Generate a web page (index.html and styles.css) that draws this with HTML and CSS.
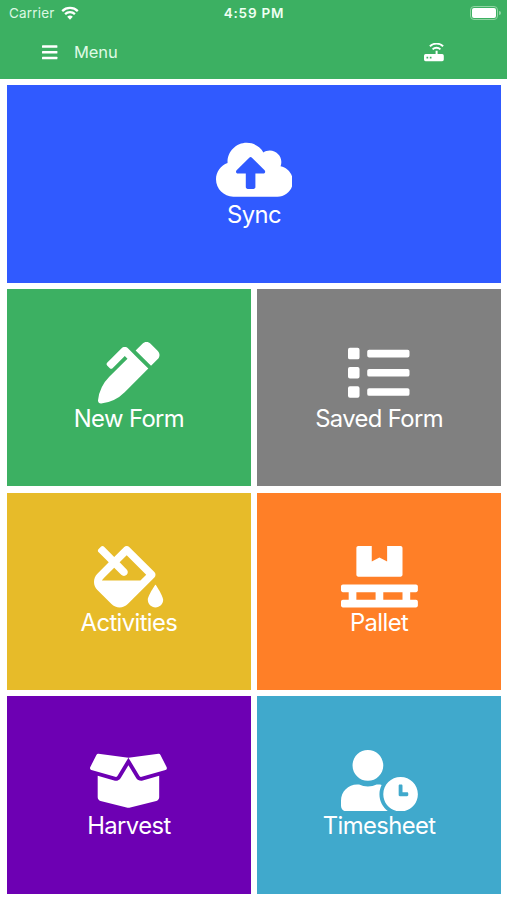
FILE: index.html
```
<!DOCTYPE html>
<html lang="en">

<head>
    <meta charset="UTF-8">
    <meta name="viewport" content="width=device-width, initial-scale=1.0">
    <title>Menu</title>
    <link rel="stylesheet" href="styles.css">
</head>

<body>
    <header class="header">
        <div class="status-bar">
            <div class="carrier">
                <span class="carrier-name">Carrier</span>
                <svg class="wifi" viewBox="0 0 18 14">
                    <path d="M1.2 5.1a11.2 11.2 0 0 1 15.6 0" />
                    <path d="M4.1 8.1a7 7 0 0 1 9.8 0" />
                    <path class="solid" d="M9 13.7L6.2 10.8a4 4 0 0 1 5.6 0z" />
                </svg>
            </div>
            <div class="time">4:59 PM</div>
            <div class="battery">
                <div class="battery-body"></div>
                <div class="battery-cap"></div>
            </div>
        </div>
        <nav class="toolbar">
            <div class="menu">
                <svg class="bars" viewBox="0 0 16 15">
                    <rect x="0" y="0.2" width="15.4" height="2.6" rx="0.6" />
                    <rect x="0" y="6" width="15.4" height="2.6" rx="0.6" />
                    <rect x="0" y="11.7" width="15.4" height="2.6" rx="0.6" />
                </svg>
                <span class="menu-title">Menu</span>
            </div>
            <svg class="router" viewBox="0 0 20 19">
                <path class="line" d="M5.9 3.3a9.5 9.5 0 0 1 13.2 0M8.6 6.4a5.6 5.6 0 0 1 7.8 0" />
                <path fill-rule="evenodd" d="M11.6 7.7h2v3.4h4.6a1.6 1.6 0 0 1 1.6 1.6v3.9a1.6 1.6 0 0 1-1.6 1.6H1.6A1.6 1.6 0 0 1 0 16.6v-3.9a1.6 1.6 0 0 1 1.6-1.6h10zM2.5 13.7v1.8h1.7v-1.8zM5.8 13.7v1.8h1.7v-1.8z" />
            </svg>
        </nav>
    </header>

    <main class="tiles">
        <a class="tile sync">
            <svg class="icon" viewBox="0 0 640 512">
                <path d="M537.6 226.6c4.1-10.7 6.4-22.4 6.4-34.6 0-53-43-96-96-96-19.7 0-38.1 6-53.3 16.2C367 64.2 315.3 32 256 32c-88.4 0-160 71.6-160 160 0 2.7.1 5.4.2 8.1C40.2 219.8 0 273.2 0 336c0 79.5 64.5 144 144 144h368c70.7 0 128-57.3 128-128 0-61.9-44-113.6-102.4-125.4zM393.4 288H328v112c0 8.8-7.2 16-16 16h-48c-8.8 0-16-7.2-16-16V288h-65.4c-14.3 0-21.4-17.2-11.3-27.3l105.4-105.4c6.2-6.2 16.4-6.2 22.6 0l105.4 105.4c10.1 10.1 2.9 27.3-11.3 27.3z" />
            </svg>
            <span class="label">Sync</span>
        </a>
        <a class="tile new-form">
            <svg class="icon" viewBox="0 0 512 512">
                <path d="M497.94 74.17l-60.11-60.11c-18.75-18.75-49.16-18.75-67.91 0l-56.55 56.55 128.02 128.02 56.55-56.55c18.75-18.75 18.75-49.15 0-67.91zm-246.8-20.53c-15.62-15.62-40.94-15.62-56.56 0L75.8 172.43c-6.25 6.25-6.25 16.38 0 22.62l22.63 22.63c6.25 6.25 16.38 6.25 22.63 0l101.82-101.82 22.63 22.62L93.95 290.03A327.038 327.038 0 0 0 .17 485.11l-.03.23c-1.7 15.28 11.21 28.2 26.49 26.51a327.02 327.02 0 0 0 195.34-93.8l196.79-196.79-82.77-82.77-84.85-84.85z" />
            </svg>
            <span class="label">New Form</span>
        </a>
        <a class="tile saved-form">
            <svg class="icon" viewBox="0 0 512 512">
                <path d="M80 368H16a16 16 0 0 0-16 16v64a16 16 0 0 0 16 16h64a16 16 0 0 0 16-16v-64a16 16 0 0 0-16-16zm0-320H16A16 16 0 0 0 0 64v64a16 16 0 0 0 16 16h64a16 16 0 0 0 16-16V64a16 16 0 0 0-16-16zm0 160H16a16 16 0 0 0-16 16v64a16 16 0 0 0 16 16h64a16 16 0 0 0 16-16v-64a16 16 0 0 0-16-16zm416 176H176a16 16 0 0 0-16 16v32a16 16 0 0 0 16 16h320a16 16 0 0 0 16-16v-32a16 16 0 0 0-16-16zm0-320H176a16 16 0 0 0-16 16v32a16 16 0 0 0 16 16h320a16 16 0 0 0 16-16V80a16 16 0 0 0-16-16zm0 160H176a16 16 0 0 0-16 16v32a16 16 0 0 0 16 16h320a16 16 0 0 0 16-16v-32a16 16 0 0 0-16-16z" />
            </svg>
            <span class="label">Saved Form</span>
        </a>
        <a class="tile activities">
            <svg class="icon" viewBox="0 0 576 512">
                <path d="M512 320s-64 92.65-64 128c0 35.35 28.66 64 64 64s64-28.65 64-64-64-128-64-128zm-9.37-102.94L294.94 9.37C288.69 3.12 280.5 0 272.31 0s-16.38 3.12-22.62 9.37l-81.58 81.58L81.93 4.76c-6.25-6.25-16.38-6.25-22.62 0L36.69 27.38c-6.24 6.25-6.24 16.38 0 22.62l86.19 86.18-94.76 94.76c-37.49 37.48-37.49 98.26 0 135.75l117.19 117.19c18.74 18.74 43.31 28.12 67.87 28.12 24.57 0 49.13-9.37 67.87-28.12l221.57-221.57c12.5-12.5 12.5-32.75.01-45.25zm-116.22 70.97H65.93c1.36-3.84 3.57-7.98 7.43-11.83l13.15-13.15 81.61-81.61 58.6 58.6c12.49 12.49 32.75 12.49 45.24 0s12.49-32.75 0-45.24l-58.6-58.6 58.95-58.95 162.44 162.44-48.34 48.34z" />
            </svg>
            <span class="label">Activities</span>
        </a>
        <a class="tile pallet">
            <svg class="icon" viewBox="0 0 640 512">
                <path d="M144 256h352c8.8 0 16-7.2 16-16V16c0-8.8-7.2-16-16-16H384v128l-64-32-64 32V0H144c-8.8 0-16 7.2-16 16v224c0 8.8 7.2 16 16 16zm480 128c8.8 0 16-7.2 16-16v-32c0-8.8-7.2-16-16-16H16c-8.8 0-16 7.2-16 16v32c0 8.8 7.2 16 16 16h48v64H16c-8.8 0-16 7.2-16 16v32c0 8.8 7.2 16 16 16h608c8.8 0 16-7.2 16-16v-32c0-8.8-7.2-16-16-16h-48v-64h48zm-336 64H128v-64h160v64zm224 0H352v-64h160v64z" />
            </svg>
            <span class="label">Pallet</span>
        </a>
        <a class="tile harvest">
            <svg class="icon" viewBox="0 0 640 512">
                <path d="M425.7 256c-16.9 0-32.8-9-41.4-23.4L320 126l-64.2 106.6c-8.7 14.5-24.6 23.5-41.5 23.5-4.5 0-9-.6-13.3-1.9L64 215v178c0 14.7 10 27.5 24.2 31l216.2 54.1c10.2 2.5 20.9 2.5 31 0L551.8 424c14.2-3.6 24.2-16.4 24.2-31V215l-137 39.1c-4.3 1.3-8.8 1.9-13.3 1.9zm212.6-112.2L586.8 41c-3.1-6.2-9.8-9.8-16.7-8.9L320 64l91.7 152.1c3.8 6.3 11.4 9.3 18.5 7.3l197.9-56.5c9.9-2.9 14.7-13.9 10.2-23.1zM53.2 41L1.7 143.8c-4.6 9.2.3 20.2 10.1 23l197.9 56.5c7.1 2 14.7-1 18.5-7.3L320 64 69.8 32.1c-6.9-.8-13.5 2.7-16.6 8.9z" />
            </svg>
            <span class="label">Harvest</span>
        </a>
        <a class="tile timesheet">
            <svg class="icon" viewBox="0 0 640 512">
                <path d="M496 224c-79.6 0-144 64.4-144 144s64.4 144 144 144 144-64.4 144-144-64.4-144-144-144zm64 150.3c0 5.3-4.4 9.7-9.7 9.7h-60.6c-5.3 0-9.7-4.4-9.7-9.7v-76.6c0-5.3 4.4-9.7 9.7-9.7h12.6c5.3 0 9.7 4.4 9.7 9.7V352h38.3c5.3 0 9.7 4.4 9.7 9.7v12.6zM320 368c0-27.8 6.7-54.1 18.2-77.5-8-1.5-16.2-2.5-24.6-2.5h-16.7c-22.2 10.2-46.9 16-72.9 16s-50.6-5.8-72.9-16h-16.7C60.2 288 0 348.2 0 422.4V464c0 26.5 21.5 48 48 48h347.1c-45.3-31.9-75.1-84.5-75.1-144zm-96-112c70.7 0 128-57.3 128-128S294.7 0 224 0 96 57.3 96 128s57.3 128 128 128z" />
            </svg>
            <span class="label">Timesheet</span>
        </a>
    </main>
</body>

</html>
```
FILE: styles.css
```
* {
    box-sizing: border-box;
}

body {
    margin: 0;
    height: 900px;
    background: white;
    color: white;
    font-family: Inter, 'Liberation Sans', sans-serif;
    overflow: hidden;
}

svg {
    display: block;
    fill: white;
}

/* Header */
.header {
    height: 79px;
    background: #3cb062;
}

.status-bar {
    display: grid;
    grid-template-columns: 1fr auto 1fr;
    align-items: center;
    height: 26px;
    padding: 0 6px 0 9px;
    font-size: 13.5px;
}

.carrier {
    display: flex;
    align-items: center;
    gap: 6px;
    color: #dcf8e2;
}

.carrier-name {
    letter-spacing: 0.2px;
}

.wifi {
    width: 18px;
    height: 14px;
}

.wifi path {
    fill: none;
    stroke: white;
    stroke-width: 2.3;
}

.wifi .solid {
    fill: white;
    stroke: none;
}

.time {
    margin-right: 2px;
    font-weight: 600;
    letter-spacing: 0.8px;
    color: #effff2;
}

.battery {
    display: flex;
    align-items: center;
    justify-content: flex-end;
    gap: 1px;
}

.battery-body {
    width: 28px;
    height: 14px;
    border: 1px solid #8fd5a2;
    border-radius: 4px;
    padding: 1px;
    background: white content-box;
}

.battery-cap {
    width: 2px;
    height: 4px;
    border-radius: 0 2px 2px 0;
    background: #8fd5a2;
}

.toolbar {
    display: flex;
    align-items: center;
    justify-content: space-between;
    height: 52px;
    padding: 0 63px 0 42px;
}

.menu {
    display: flex;
    align-items: center;
    gap: 16px;
}

.bars {
    width: 16px;
    height: 15px;
}

.menu-title {
    font-size: 16.5px;
    letter-spacing: -0.1px;
    color: #dffae5;
}

.router {
    width: 20px;
    height: 19px;
}

.router .line {
    fill: none;
    stroke: white;
    stroke-width: 1.9;
}

/* Tiles */
.tiles {
    display: grid;
    grid-template-columns: 1fr 1fr;
    grid-template-rows: repeat(4, 1fr);
    gap: 6.3px;
    height: 821px;
    padding: 6px 6px 6px 7px;
}

.tile {
    display: flex;
    flex-direction: column;
    align-items: center;
    padding-top: 53.5px;
}

.icon {
    height: 61.5px;
}

.label {
    font-size: 23.8px;
    line-height: 29px;
    font-weight: 400;
    letter-spacing: -0.6px;
}

.sync {
    grid-column: span 2;
    background: #305aff;
}

.new-form {
    background: #3cb062;
}

.saved-form {
    background: #808080;
}

.activities {
    background: #e7bb29;
}

.pallet {
    background: #ff7f27;
}

.harvest {
    background: #6d00b3;
}

.timesheet {
    background: #40a9cc;
}
```
